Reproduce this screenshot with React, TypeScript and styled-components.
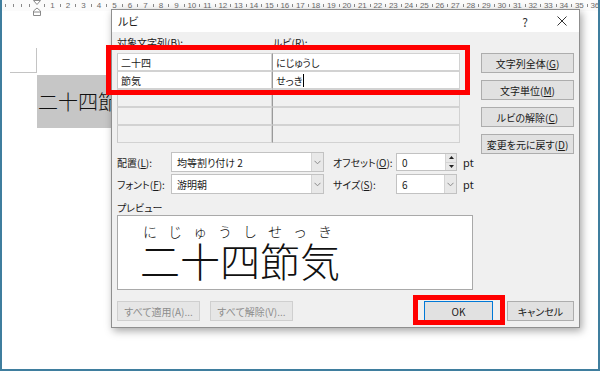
import styled, { createGlobalStyle } from "styled-components";

const UI_FONT = `"Noto Sans CJK JP", "Noto Sans", sans-serif`;

const GlobalStyle = createGlobalStyle`
  html, body {
    margin: 0;
    padding: 0;
    background: #fff;
  }
  body {
    font-family: ${UI_FONT};
  }
`;

// ---------------- document behind the dialog ----------------
const Frame = styled.div`
  position: relative;
  width: 600px;
  height: 371px;
  box-sizing: border-box;
  border: 2px solid #3f7e9e;
  border-top: none;
  background: #fff;
  overflow: hidden;
`;

const Ruler = styled.div`
  display: flex;
  align-items: center;
  height: 11px;
  font-family: "Liberation Sans", sans-serif;
  font-size: 8px;
  color: #6b6b6b;
  background: #fbfbfb;
`;

const Mark = styled.span`
  flex: 0 0 7.75px;
  min-width: 0;
  display: flex;
  justify-content: center;
  align-items: center;
  white-space: nowrap;
  line-height: 11px;
`;

const Tick = styled.i`
  display: block;
  flex: none;
  width: 1px;
  height: 3px;
  background: #8a8a8a;
`;

const IndentMarker = styled.svg`
  position: absolute;
  left: 31px;
  top: 0;
`;

const Page = styled.div`
  padding: 37px 0 0 8px;
`;

const CropMark = styled.div`
  width: 26px;
  height: 24px;
  border-right: 1px solid #c4c4c4;
  border-bottom: 1px solid #c4c4c4;
`;

const Highlight = styled.div`
  margin: 2px 0 0 27px;
  width: 220px;
  height: 53px;
  padding-left: 1px;
  background: #c6c6c6;
  color: #111;
  font-family: ${UI_FONT};
  font-weight: 300;
  font-size: 20px;
  line-height: 53px;
  white-space: nowrap;
`;

// ---------------- dialog ----------------
const Dialog = styled.div`
  position: absolute;
  left: 109px;
  top: 9px;
  width: 469px;
  height: 319px;
  box-sizing: border-box;
  display: flex;
  flex-direction: column;
  border: 1px solid #8f8f8f;
  background: #f0f0f0;
  box-shadow: 2px 3px 8px rgba(0, 0, 0, 0.35);
  font-family: ${UI_FONT};
  font-size: 10px;
  font-feature-settings: "palt";
  color: #1a1a1a;
`;

const TitleBar = styled.div`
  display: flex;
  align-items: center;
  height: 22px;
  padding-left: 6px;
  background: #fff;
`;

const Title = styled.span`
  flex: 1;
  font-size: 11px;
`;

const TitleButton = styled.span<{ $w: number; $gap?: number }>`
  display: flex;
  align-items: center;
  justify-content: center;
  width: ${(p) => p.$w}px;
  height: 22px;
  margin-left: ${(p) => p.$gap ?? 0}px;
  font-size: 12px;
  color: #333;
`;

const Body = styled.div`
  flex: 1;
  display: flex;
  flex-direction: column;
  padding: 5px 5px 6px 5px;
`;

const Main = styled.div`
  display: grid;
  grid-template-columns: 356px 93px;
  column-gap: 8px;
`;

const LeftCol = styled.div`
  display: flex;
  flex-direction: column;
`;

const HeaderRow = styled.div`
  display: grid;
  grid-template-columns: 155px 188px;
  height: 12px;
  line-height: 12px;
  margin-bottom: 4px;
  & > span + span {
    padding-left: 1px;
  }
`;

const Key = styled.span`
  text-decoration: underline;
`;

const Table = styled.div`
  display: grid;
  grid-template-columns: 155px 188px;
  grid-auto-rows: 18px;
  width: 343px;
`;

const Cell = styled.div<{ $edit?: boolean; $right?: boolean }>`
  box-sizing: border-box;
  display: flex;
  align-items: center;
  padding-left: 3px;
  border: 1px solid #d2d2d2;
  border-left: 1px solid ${(p) => (p.$right ? "#9a9a9a" : "#c8c8c8")};
  background: ${(p) => (p.$edit ? "#fff" : "#f0f0f0")};
  white-space: nowrap;
`;

const Caret = styled.i`
  display: inline-block;
  width: 1px;
  height: 13px;
  margin-left: 1px;
  background: #000;
`;

const Options = styled.div`
  display: grid;
  grid-template-columns: 54px 153px 72px 61px auto;
  grid-auto-rows: 20px;
  row-gap: 2px;
  margin-top: 9px;
`;

const OptLabel = styled.span<{ $indent?: number }>`
  display: flex;
  align-items: center;
  padding-left: ${(p) => p.$indent ?? 0}px;
  white-space: nowrap;
`;

const Field = styled.div<{ $h?: number }>`
  box-sizing: border-box;
  display: flex;
  align-self: center;
  height: ${(p) => p.$h ?? 20}px;
  border: 1px solid #c2c2c2;
  background: #fff;
`;

const FieldValue = styled.span`
  flex: 1;
  display: flex;
  align-items: center;
  padding-left: 5px;
  white-space: nowrap;
`;

const DropButton = styled.span`
  display: flex;
  align-items: center;
  justify-content: center;
  width: 11px;
  background: #e8e8e8;
  border-left: 1px solid #d4d4d4;
`;

const Spin = styled.span`
  display: flex;
  flex-direction: column;
  width: 10px;
  background: #e8e8e8;
  border-left: 1px solid #d4d4d4;
`;

const SpinHalf = styled.span`
  flex: 1;
  display: flex;
  align-items: center;
  justify-content: center;
  & + & {
    border-top: 1px solid #d4d4d4;
  }
`;

const Unit = styled.span`
  display: flex;
  align-items: center;
  padding-left: 6px;
  font-family: "Noto Sans", sans-serif;
  font-size: 11px;
`;

const PreviewLabel = styled.div`
  margin-top: 8px;
  height: 12px;
  line-height: 12px;
`;

const PreviewBox = styled.div`
  box-sizing: border-box;
  display: flex;
  flex-direction: column;
  height: 75px;
  margin-top: 1px;
  padding-left: 22px;
  border: 1px solid #a9a9a9;
  background: #fff;
  color: #111;
  font-weight: 300;
  font-feature-settings: normal;
  white-space: nowrap;
`;

const Ruby = styled.span`
  margin-top: 7px;
  padding-left: 3px;
  font-size: 14px;
  line-height: 16px;
  letter-spacing: 11px;
`;

const Base = styled.span`
  margin-top: 1px;
  font-size: 40px;
  line-height: 40px;
`;

const RightCol = styled.div`
  display: flex;
  flex-direction: column;
  gap: 7px;
  padding-top: 16px;
`;

const Button = styled.div<{ $w?: number; $primary?: boolean; $disabled?: boolean }>`
  box-sizing: border-box;
  display: flex;
  align-items: center;
  justify-content: center;
  width: ${(p) => (p.$w ? `${p.$w}px` : "auto")};
  height: 20px;
  border: 1px solid
    ${(p) => (p.$primary ? "#0078d7" : p.$disabled ? "#cfcfcf" : "#adadad")};
  background: ${(p) => (p.$disabled ? "#e6e6e6" : "#e1e1e1")};
  color: ${(p) => (p.$disabled ? "#8c8c8c" : "#1a1a1a")};
  white-space: nowrap;
`;

const BottomRow = styled.div`
  display: flex;
  justify-content: space-between;
  margin-top: 11px;
`;

const ButtonGroup = styled.div<{ $gap: number }>`
  display: flex;
  gap: ${(p) => p.$gap}px;
`;

// red annotation frames drawn over the screenshot
const Callout = styled.div<{ $x: number; $y: number; $w: number; $h: number }>`
  position: absolute;
  left: ${(p) => p.$x}px;
  top: ${(p) => p.$y}px;
  width: ${(p) => p.$w}px;
  height: ${(p) => p.$h}px;
  box-sizing: border-box;
  border: 5px solid #ff0000;
  pointer-events: none;
`;

const Chevron = () => (
  <svg width="7" height="5" viewBox="0 0 7 5">
    <path d="M0.5 0.8 L3.5 3.8 L6.5 0.8" fill="none" stroke="#8a8a8a" strokeWidth="1" />
  </svg>
);

const Triangle = ({ up }: { up?: boolean }) => (
  <svg width="5" height="3" viewBox="0 0 5 3">
    <path d={up ? "M0 3 L2.5 0 L5 3 Z" : "M0 0 L2.5 3 L5 0 Z"} fill="#222" />
  </svg>
);

export default function App() {
  const marks: React.ReactNode[] = [];
  for (let j = -4; j <= 72; j++) {
    let content: React.ReactNode = <Tick />;
    if (j === 0) content = null;
    else if (j > 0 && j % 2 === 0) content = j / 2;
    marks.push(<Mark key={j}>{content}</Mark>);
  }

  return (
    <>
      <GlobalStyle />
      <Frame>
        <Ruler>{marks}</Ruler>
        <IndentMarker width="9" height="16" viewBox="0 0 9 16">
          <path d="M0.5 0.5 H7.5 L4 4.5 Z" fill="#fff" stroke="#8a8a8a" />
          <path d="M4 8 L7.5 11 V15.5 H0.5 V11 Z" fill="#fff" stroke="#8a8a8a" />
          <path d="M0.5 12 H7.5" stroke="#8a8a8a" />
        </IndentMarker>
        <Page>
          <CropMark />
          <Highlight>二十四節気</Highlight>
        </Page>

        <Dialog>
          <TitleBar>
            <Title>ルビ</Title>
            <TitleButton $w={26}>?</TitleButton>
            <TitleButton $w={34} $gap={7}>
              <svg width="10" height="10" viewBox="0 0 10 10">
                <path d="M0.5 0.5 L9.5 9.5 M9.5 0.5 L0.5 9.5" stroke="#333" strokeWidth="1" />
              </svg>
            </TitleButton>
          </TitleBar>
          <Body>
            <Main>
              <LeftCol>
                <HeaderRow>
                  <span>
                    対象文字列(<Key>B</Key>):
                  </span>
                  <span>
                    ルビ(<Key>R</Key>):
                  </span>
                </HeaderRow>
                <Table>
                  <Cell $edit>二十四</Cell>
                  <Cell $edit $right>
                    にじゅうし
                  </Cell>
                  <Cell $edit>節気</Cell>
                  <Cell $edit $right>
                    せっき
                    <Caret />
                  </Cell>
                  <Cell />
                  <Cell $right />
                  <Cell />
                  <Cell $right />
                  <Cell />
                  <Cell $right />
                </Table>
                <Options>
                  <OptLabel>
                    配置(<Key>L</Key>):
                  </OptLabel>
                  <Field>
                    <FieldValue>均等割り付け 2</FieldValue>
                    <DropButton>
                      <Chevron />
                    </DropButton>
                  </Field>
                  <OptLabel $indent={9}>
                    オフセット(<Key>O</Key>):
                  </OptLabel>
                  <Field $h={18}>
                    <FieldValue>0</FieldValue>
                    <Spin>
                      <SpinHalf>
                        <Triangle up />
                      </SpinHalf>
                      <SpinHalf>
                        <Triangle />
                      </SpinHalf>
                    </Spin>
                  </Field>
                  <Unit>pt</Unit>

                  <OptLabel>
                    フォント(<Key>F</Key>):
                  </OptLabel>
                  <Field>
                    <FieldValue>游明朝</FieldValue>
                    <DropButton>
                      <Chevron />
                    </DropButton>
                  </Field>
                  <OptLabel $indent={9}>
                    サイズ(<Key>S</Key>):
                  </OptLabel>
                  <Field>
                    <FieldValue>6</FieldValue>
                    <DropButton>
                      <Chevron />
                    </DropButton>
                  </Field>
                  <Unit>pt</Unit>
                </Options>
                <PreviewLabel>プレビュー</PreviewLabel>
                <PreviewBox>
                  <Ruby>にじゅうしせっき</Ruby>
                  <Base>二十四節気</Base>
                </PreviewBox>
              </LeftCol>
              <RightCol>
                <Button>
                  文字列全体(<Key>G</Key>)
                </Button>
                <Button>
                  文字単位(<Key>M</Key>)
                </Button>
                <Button>
                  ルビの解除(<Key>C</Key>)
                </Button>
                <Button>
                  変更を元に戻す(<Key>D</Key>)
                </Button>
              </RightCol>
            </Main>
            <BottomRow>
              <ButtonGroup $gap={10}>
                <Button $w={83} $disabled>
                  すべて適用(A)...
                </Button>
                <Button $w={83} $disabled>
                  すべて解除(V)...
                </Button>
              </ButtonGroup>
              <ButtonGroup $gap={14}>
                <Button $w={69} $primary>
                  OK
                </Button>
                <Button $w={67}>キャンセル</Button>
              </ButtonGroup>
            </BottomRow>
          </Body>
        </Dialog>

        <Callout $x={104} $y={45} $w={364} $h={50} />
        <Callout $x={411} $y={295} $w={92} $h={30} />
      </Frame>
    </>
  );
}
